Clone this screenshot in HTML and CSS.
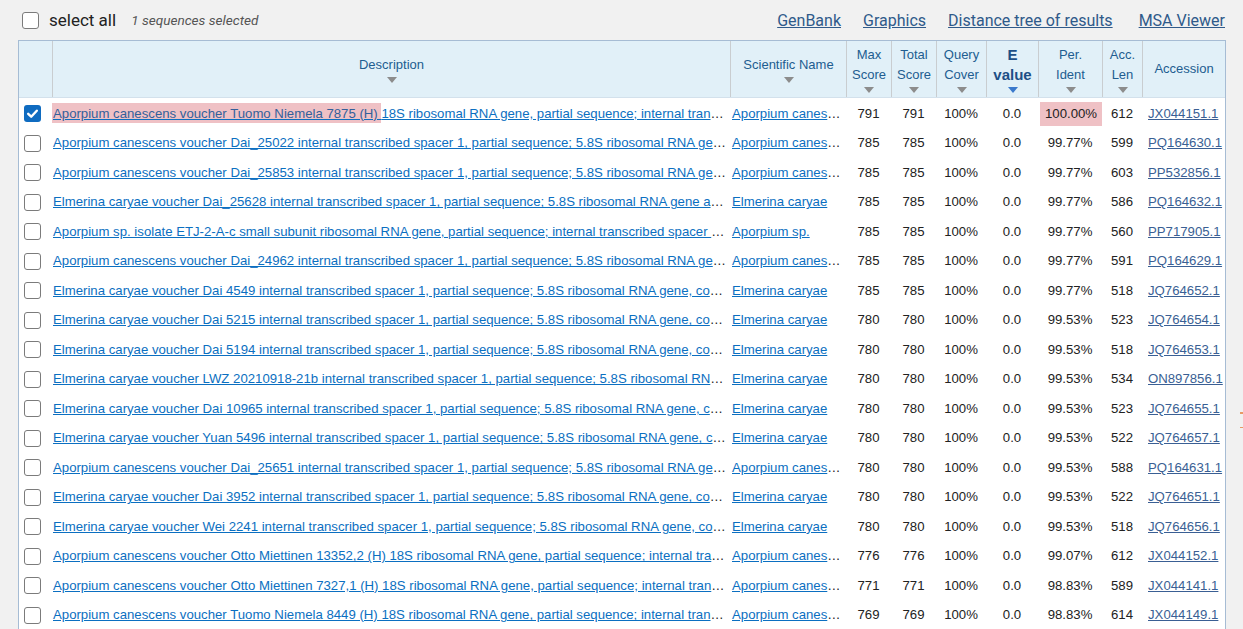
FILE: index.html
```html
<!DOCTYPE html>
<html lang="en">
<head>
<meta charset="utf-8">
<title>Sequences producing significant alignments</title>
<link rel="stylesheet" href="styles.css">
</head>
<body>
<div class="toolbar">
  <label class="select-all"><span class="box"></span><span class="sa-text">select all</span></label>
  <span class="count">1 sequences selected</span>
  <nav class="views">
    <a href="#">GenBank</a>
    <a href="#">Graphics</a>
    <a href="#">Distance tree of results</a>
    <a href="#" class="msa">MSA Viewer</a>
  </nav>
</div>

<div class="results">
  <div class="row head">
    <div class="th first"></div>
    <div class="th"><span>Description</span><i class="sort"></i></div>
    <div class="th"><span>Scientific Name</span><i class="sort"></i></div>
    <div class="th"><span>Max<br>Score</span><i class="sort"></i></div>
    <div class="th"><span>Total<br>Score</span><i class="sort"></i></div>
    <div class="th"><span>Query<br>Cover</span><i class="sort"></i></div>
    <div class="th sorted"><span>E<br>value</span><i class="sort"></i></div>
    <div class="th"><span>Per.<br>Ident</span><i class="sort"></i></div>
    <div class="th"><span>Acc.<br>Len</span><i class="sort"></i></div>
    <div class="th"><span>Accession</span></div>
  </div>

  <div class="row">
    <div class="c chk"><span class="box on"><svg viewBox="0 0 17 17" width="17" height="17"><path d="M4.2 8.8l3 2.9 5.6-6" fill="none" stroke="#fff" stroke-width="2.4" stroke-linecap="round" stroke-linejoin="round"/></svg></span></div>
    <div class="c desc"><a href="#"><span class="hl">Aporpium canescens voucher Tuomo Niemela 7875 (H) </span>18S ribosomal RNA gene, partial sequence; internal transcribed spacer 1, 5.8S ribosomal RNA gene, and internal transcribed spacer 2, complete sequence; and 28S ribosomal RNA gene, partial sequence</a></div>
    <div class="c sci"><a href="#">Aporpium canescens</a></div>
    <div class="c n">791</div><div class="c n">791</div><div class="c n">100%</div><div class="c n">0.0</div>
    <div class="c n"><span class="ident-hl">100.00%</span></div>
    <div class="c n">612</div>
    <div class="c acc"><a href="#">JX044151.1</a></div>
  </div>

  <div class="row">
    <div class="c chk"><span class="box"></span></div>
    <div class="c desc"><a href="#">Aporpium canescens voucher Dai_25022 internal transcribed spacer 1, partial sequence; 5.8S ribosomal RNA gene, and internal transcribed spacer 2, complete sequence; and large subunit ribosomal RNA gene, partial sequence</a></div>
    <div class="c sci"><a href="#">Aporpium canescens</a></div>
    <div class="c n">785</div><div class="c n">785</div><div class="c n">100%</div><div class="c n">0.0</div>
    <div class="c n">99.77%</div><div class="c n">599</div>
    <div class="c acc"><a href="#">PQ164630.1</a></div>
  </div>

  <div class="row">
    <div class="c chk"><span class="box"></span></div>
    <div class="c desc"><a href="#">Aporpium canescens voucher Dai_25853 internal transcribed spacer 1, partial sequence; 5.8S ribosomal RNA gene, and internal transcribed spacer 2, complete sequence; and large subunit ribosomal RNA gene, partial sequence</a></div>
    <div class="c sci"><a href="#">Aporpium canescens</a></div>
    <div class="c n">785</div><div class="c n">785</div><div class="c n">100%</div><div class="c n">0.0</div>
    <div class="c n">99.77%</div><div class="c n">603</div>
    <div class="c acc"><a href="#">PP532856.1</a></div>
  </div>

  <div class="row">
    <div class="c chk"><span class="box"></span></div>
    <div class="c desc"><a href="#">Elmerina caryae voucher Dai_25628 internal transcribed spacer 1, partial sequence; 5.8S ribosomal RNA gene and internal transcribed spacer 2, complete sequence; and large subunit ribosomal RNA gene, partial sequence</a></div>
    <div class="c sci"><a href="#">Elmerina caryae</a></div>
    <div class="c n">785</div><div class="c n">785</div><div class="c n">100%</div><div class="c n">0.0</div>
    <div class="c n">99.77%</div><div class="c n">586</div>
    <div class="c acc"><a href="#">PQ164632.1</a></div>
  </div>

  <div class="row">
    <div class="c chk"><span class="box"></span></div>
    <div class="c desc"><a href="#">Aporpium sp. isolate ETJ-2-A-c small subunit ribosomal RNA gene, partial sequence; internal transcribed spacer 1, 5.8S ribosomal RNA gene, and internal transcribed spacer 2, complete sequence; and large subunit ribosomal RNA gene, partial sequence</a></div>
    <div class="c sci"><a href="#">Aporpium sp.</a></div>
    <div class="c n">785</div><div class="c n">785</div><div class="c n">100%</div><div class="c n">0.0</div>
    <div class="c n">99.77%</div><div class="c n">560</div>
    <div class="c acc"><a href="#">PP717905.1</a></div>
  </div>

  <div class="row">
    <div class="c chk"><span class="box"></span></div>
    <div class="c desc"><a href="#">Aporpium canescens voucher Dai_24962 internal transcribed spacer 1, partial sequence; 5.8S ribosomal RNA gene, and internal transcribed spacer 2, complete sequence; and large subunit ribosomal RNA gene, partial sequence</a></div>
    <div class="c sci"><a href="#">Aporpium canescens</a></div>
    <div class="c n">785</div><div class="c n">785</div><div class="c n">100%</div><div class="c n">0.0</div>
    <div class="c n">99.77%</div><div class="c n">591</div>
    <div class="c acc"><a href="#">PQ164629.1</a></div>
  </div>

  <div class="row">
    <div class="c chk"><span class="box"></span></div>
    <div class="c desc"><a href="#">Elmerina caryae voucher Dai 4549 internal transcribed spacer 1, partial sequence; 5.8S ribosomal RNA gene, complete sequence; and internal transcribed spacer 2, partial sequence</a></div>
    <div class="c sci"><a href="#">Elmerina caryae</a></div>
    <div class="c n">785</div><div class="c n">785</div><div class="c n">100%</div><div class="c n">0.0</div>
    <div class="c n">99.77%</div><div class="c n">518</div>
    <div class="c acc"><a href="#">JQ764652.1</a></div>
  </div>

  <div class="row">
    <div class="c chk"><span class="box"></span></div>
    <div class="c desc"><a href="#">Elmerina caryae voucher Dai 5215 internal transcribed spacer 1, partial sequence; 5.8S ribosomal RNA gene, complete sequence; and internal transcribed spacer 2, partial sequence</a></div>
    <div class="c sci"><a href="#">Elmerina caryae</a></div>
    <div class="c n">780</div><div class="c n">780</div><div class="c n">100%</div><div class="c n">0.0</div>
    <div class="c n">99.53%</div><div class="c n">523</div>
    <div class="c acc"><a href="#">JQ764654.1</a></div>
  </div>

  <div class="row">
    <div class="c chk"><span class="box"></span></div>
    <div class="c desc"><a href="#">Elmerina caryae voucher Dai 5194 internal transcribed spacer 1, partial sequence; 5.8S ribosomal RNA gene, complete sequence; and internal transcribed spacer 2, partial sequence</a></div>
    <div class="c sci"><a href="#">Elmerina caryae</a></div>
    <div class="c n">780</div><div class="c n">780</div><div class="c n">100%</div><div class="c n">0.0</div>
    <div class="c n">99.53%</div><div class="c n">518</div>
    <div class="c acc"><a href="#">JQ764653.1</a></div>
  </div>

  <div class="row">
    <div class="c chk"><span class="box"></span></div>
    <div class="c desc"><a href="#">Elmerina caryae voucher LWZ 20210918-21b internal transcribed spacer 1, partial sequence; 5.8S ribosomal RNA gene, and internal transcribed spacer 2, complete sequence; and large subunit ribosomal RNA gene, partial sequence</a></div>
    <div class="c sci"><a href="#">Elmerina caryae</a></div>
    <div class="c n">780</div><div class="c n">780</div><div class="c n">100%</div><div class="c n">0.0</div>
    <div class="c n">99.53%</div><div class="c n">534</div>
    <div class="c acc"><a href="#">ON897856.1</a></div>
  </div>

  <div class="row">
    <div class="c chk"><span class="box"></span></div>
    <div class="c desc"><a href="#">Elmerina caryae voucher Dai 10965 internal transcribed spacer 1, partial sequence; 5.8S ribosomal RNA gene, complete sequence; and internal transcribed spacer 2, partial sequence</a></div>
    <div class="c sci"><a href="#">Elmerina caryae</a></div>
    <div class="c n">780</div><div class="c n">780</div><div class="c n">100%</div><div class="c n">0.0</div>
    <div class="c n">99.53%</div><div class="c n">523</div>
    <div class="c acc"><a href="#">JQ764655.1</a></div>
  </div>

  <div class="row">
    <div class="c chk"><span class="box"></span></div>
    <div class="c desc"><a href="#">Elmerina caryae voucher Yuan 5496 internal transcribed spacer 1, partial sequence; 5.8S ribosomal RNA gene, complete sequence; and internal transcribed spacer 2, partial sequence</a></div>
    <div class="c sci"><a href="#">Elmerina caryae</a></div>
    <div class="c n">780</div><div class="c n">780</div><div class="c n">100%</div><div class="c n">0.0</div>
    <div class="c n">99.53%</div><div class="c n">522</div>
    <div class="c acc"><a href="#">JQ764657.1</a></div>
  </div>

  <div class="row">
    <div class="c chk"><span class="box"></span></div>
    <div class="c desc"><a href="#">Aporpium canescens voucher Dai_25651 internal transcribed spacer 1, partial sequence; 5.8S ribosomal RNA gene, and internal transcribed spacer 2, complete sequence; and large subunit ribosomal RNA gene, partial sequence</a></div>
    <div class="c sci"><a href="#">Aporpium canescens</a></div>
    <div class="c n">780</div><div class="c n">780</div><div class="c n">100%</div><div class="c n">0.0</div>
    <div class="c n">99.53%</div><div class="c n">588</div>
    <div class="c acc"><a href="#">PQ164631.1</a></div>
  </div>

  <div class="row">
    <div class="c chk"><span class="box"></span></div>
    <div class="c desc"><a href="#">Elmerina caryae voucher Dai 3952 internal transcribed spacer 1, partial sequence; 5.8S ribosomal RNA gene, complete sequence; and internal transcribed spacer 2, partial sequence</a></div>
    <div class="c sci"><a href="#">Elmerina caryae</a></div>
    <div class="c n">780</div><div class="c n">780</div><div class="c n">100%</div><div class="c n">0.0</div>
    <div class="c n">99.53%</div><div class="c n">522</div>
    <div class="c acc"><a href="#">JQ764651.1</a></div>
  </div>

  <div class="row">
    <div class="c chk"><span class="box"></span></div>
    <div class="c desc"><a href="#">Elmerina caryae voucher Wei 2241 internal transcribed spacer 1, partial sequence; 5.8S ribosomal RNA gene, complete sequence; and internal transcribed spacer 2, partial sequence</a></div>
    <div class="c sci"><a href="#">Elmerina caryae</a></div>
    <div class="c n">780</div><div class="c n">780</div><div class="c n">100%</div><div class="c n">0.0</div>
    <div class="c n">99.53%</div><div class="c n">518</div>
    <div class="c acc"><a href="#">JQ764656.1</a></div>
  </div>

  <div class="row">
    <div class="c chk"><span class="box"></span></div>
    <div class="c desc"><a href="#">Aporpium canescens voucher Otto Miettinen 13352,2 (H) 18S ribosomal RNA gene, partial sequence; internal transcribed spacer 1, 5.8S ribosomal RNA gene, and internal transcribed spacer 2, complete sequence; and 28S ribosomal RNA gene, partial sequence</a></div>
    <div class="c sci"><a href="#">Aporpium canescens</a></div>
    <div class="c n">776</div><div class="c n">776</div><div class="c n">100%</div><div class="c n">0.0</div>
    <div class="c n">99.07%</div><div class="c n">612</div>
    <div class="c acc"><a href="#">JX044152.1</a></div>
  </div>

  <div class="row">
    <div class="c chk"><span class="box"></span></div>
    <div class="c desc"><a href="#">Aporpium canescens voucher Otto Miettinen 7327,1 (H) 18S ribosomal RNA gene, partial sequence; internal transcribed spacer 1, 5.8S ribosomal RNA gene, and internal transcribed spacer 2, complete sequence; and 28S ribosomal RNA gene, partial sequence</a></div>
    <div class="c sci"><a href="#">Aporpium canescens</a></div>
    <div class="c n">771</div><div class="c n">771</div><div class="c n">100%</div><div class="c n">0.0</div>
    <div class="c n">98.83%</div><div class="c n">589</div>
    <div class="c acc"><a href="#">JX044141.1</a></div>
  </div>

  <div class="row">
    <div class="c chk"><span class="box"></span></div>
    <div class="c desc"><a href="#">Aporpium canescens voucher Tuomo Niemela 8449 (H) 18S ribosomal RNA gene, partial sequence; internal transcribed spacer 1, 5.8S ribosomal RNA gene, and internal transcribed spacer 2, complete sequence; and 28S ribosomal RNA gene, partial sequence</a></div>
    <div class="c sci"><a href="#">Aporpium canescens</a></div>
    <div class="c n">769</div><div class="c n">769</div><div class="c n">100%</div><div class="c n">0.0</div>
    <div class="c n">98.83%</div><div class="c n">614</div>
    <div class="c acc"><a href="#">JX044149.1</a></div>
  </div>
</div>

<div class="edge-tab"><i></i><i></i></div>
</body>
</html>
```

FILE: styles.css
```css
html, body {
  margin: 0;
  padding: 0;
}

body {
  background: #f1f1f1;
  font-family: "Liberation Sans", Arial, sans-serif;
  color: #222;
  position: relative;
}

/* ---- selection toolbar ---- */
.toolbar {
  height: 40px;
  display: flex;
  align-items: center;
  padding: 0 18px 0 22px;
  font-family: Roboto, "Liberation Sans", sans-serif;
}

.select-all {
  display: flex;
  align-items: center;
  gap: 10px;
}

.sa-text {
  font-size: 17px;
  color: #222;
}

.count {
  margin-left: 15px;
  font-size: 13.6px;
  font-style: italic;
  color: #555;
}

.views {
  margin-left: auto;
  display: flex;
  gap: 22px;
}

.views a {
  font-size: 16px;
  color: #2f5a8a;
  text-decoration: underline;
}

.views .msa {
  margin-left: 4px;
}

/* ---- checkboxes ---- */
.box {
  display: inline-block;
  box-sizing: border-box;
  width: 17px;
  height: 17px;
  border: 1px solid #7b7b7b;
  border-radius: 3px;
  background: #fff;
}

.box.on {
  border: none;
  background: #0f6bc0;
}

.box svg {
  display: block;
}

/* ---- results grid ---- */
.results {
  margin-left: 18px;
  width: 1208px;
  box-sizing: border-box;
  border: 1px solid #a6bcd4;
  border-bottom: none;
  background: #fff;
}

.row {
  display: grid;
  grid-template-columns: 33px 678px 116px 45px 45px 50px 52px 64px 40px 83px;
  height: 29.5px;
  align-items: center;
  font-size: 13.2px;
}

.row.head {
  height: 56px;
  align-items: stretch;
  background: #e1f0f8;
  border-bottom: 1px solid #d3e1ec;
  font-size: 13px;
}

.th {
  display: flex;
  flex-direction: column;
  align-items: center;
  justify-content: center;
  text-align: center;
  border-left: 1px solid #c9cdd0;
  color: #215d90;
  line-height: 20px;
  padding-bottom: 1px;
}

.th.first {
  border-left: none;
}

.th.sorted span {
  font-size: 15px;
  font-weight: bold;
  color: #1d4f86;
}

.sort {
  display: block;
  width: 0;
  height: 0;
  margin-top: 2px;
  border-left: 5.5px solid transparent;
  border-right: 5.5px solid transparent;
  border-top: 6px solid #8c8c8c;
}

.th.sorted .sort {
  border-top-color: #3a79cc;
}

.c {
  overflow: hidden;
  white-space: nowrap;
  text-overflow: ellipsis;
  line-height: 20px;
  padding-top: 2px;
}

.chk {
  padding: 2px 0 0 5px;
  display: flex;
  align-items: center;
}

.desc {
  padding-left: 1px;
  padding-right: 1px;
}

.sci {
  padding-left: 2px;
  padding-right: 2px;
}

.desc a,
.sci a {
  color: #0b6fc1;
  text-decoration: underline;
}

.hl {
  background: #efc1c5;
  color: #34609a;
  margin-left: -5px;
  padding: 2.5px 0 2.5px 5px;
}

.n {
  text-align: center;
  color: #222;
}

.ident-hl {
  display: block;
  margin: 0 0 0 2px;
  line-height: 24px;
  background: #efc1c5;
}

.acc {
  padding-left: 6px;
}

.acc a {
  color: #3a5f94;
  text-decoration: underline;
}

/* small tab peeking in from the right edge */
.edge-tab {
  position: absolute;
  right: 0;
  top: 412px;
  width: 3px;
}

.edge-tab i {
  display: block;
  height: 1.5px;
  margin-bottom: 13px;
  background: #e79a66;
}
```
